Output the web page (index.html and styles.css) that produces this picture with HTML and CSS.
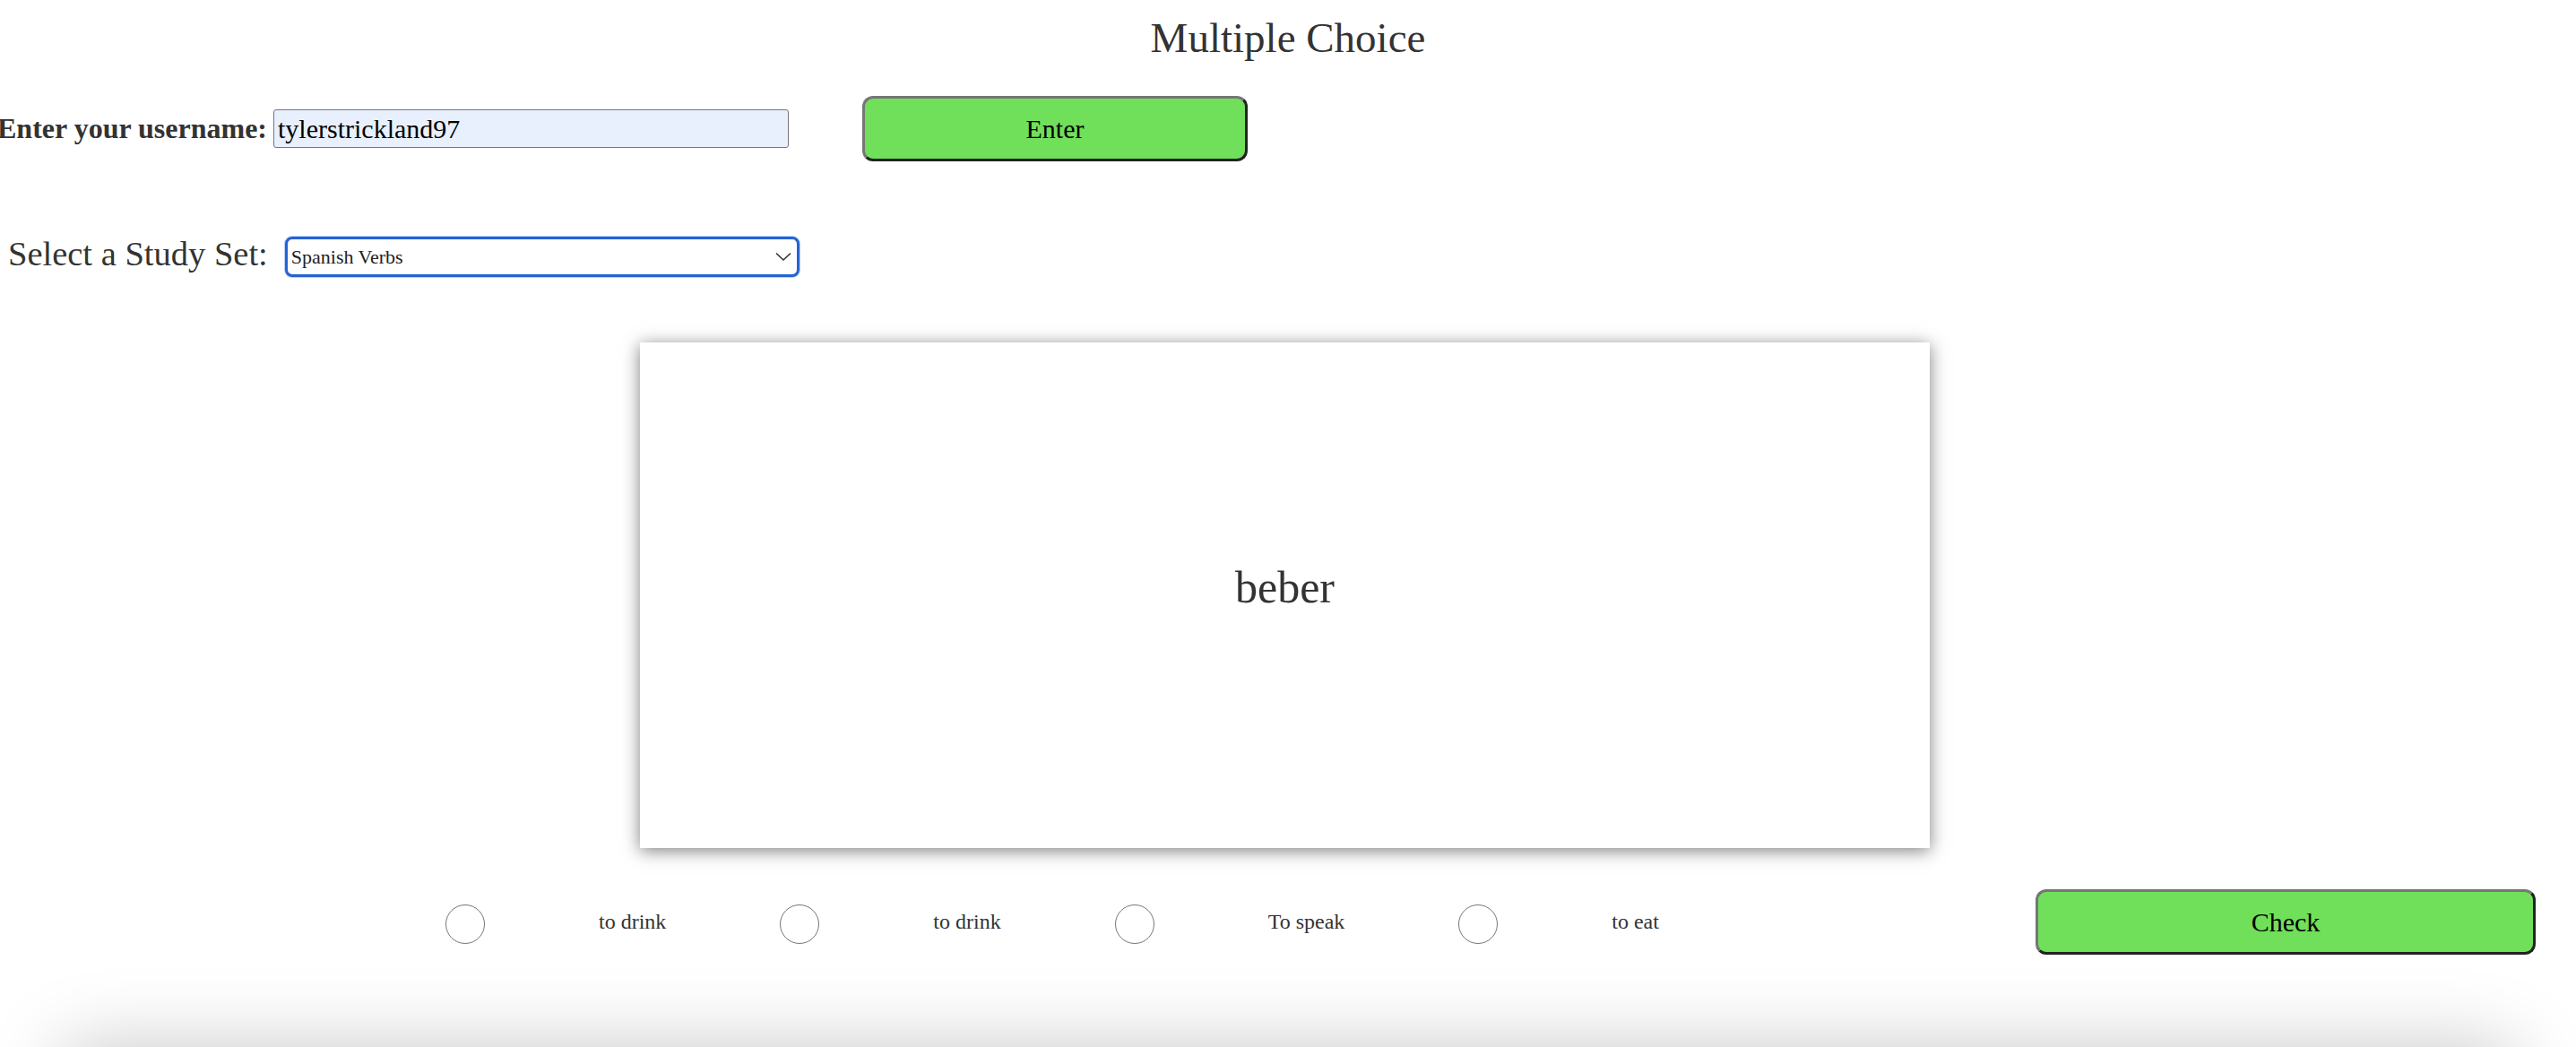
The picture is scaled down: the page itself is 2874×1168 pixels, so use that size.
FILE: index.html
```html
<!DOCTYPE html>
<html lang="en">
<head>
<meta charset="utf-8">
<title>Multiple Choice</title>
<link rel="stylesheet" href="styles.css">
</head>
<body>
<h1 class="title">Multiple Choice</h1>

<div class="user-row">
  <label class="user-label" for="username">Enter your username:</label>
  <input class="user-input" id="username" type="text" value="tylerstrickland97">
  <button class="btn btn-enter" type="button">Enter</button>
</div>

<div class="set-row">
  <label class="set-label" for="studyset">Select a Study Set:</label>
  <select class="set-select" id="studyset">
    <option>Spanish Verbs</option>
  </select>
</div>

<div class="card">
  <div class="card-word">beber</div>
</div>

<div class="answer-row">
  <input class="choice" type="radio" name="ans" id="a1"><label class="choice-label" for="a1">to drink</label>
  <input class="choice" type="radio" name="ans" id="a2"><label class="choice-label" for="a2">to drink</label>
  <input class="choice" type="radio" name="ans" id="a3"><label class="choice-label" for="a3">To speak</label>
  <input class="choice" type="radio" name="ans" id="a4"><label class="choice-label" for="a4">to eat</label>
  <button class="btn btn-check" type="button">Check</button>
</div>

<div class="next-card"></div>
</body>
</html>
```

FILE: styles.css
```css
html {
  overflow: hidden;
  background: #ffffff;
}

body {
  margin: 0;
  font-family: "Liberation Serif", "Times New Roman", serif;
  color: #333333;
  background: #ffffff;
}

.title {
  margin: 16px 0 0;
  font-size: 47px;
  line-height: 52px;
  font-weight: normal;
  text-align: center;
  color: #333333;
}

.user-row {
  display: flex;
  align-items: center;
  margin-top: 39px;
  margin-left: -3px;
  height: 73px;
}

.user-label {
  font-size: 32px;
  font-weight: bold;
  color: #333333;
  margin-right: 7px;
  white-space: nowrap;
}

.user-input {
  box-sizing: border-box;
  width: 575px;
  height: 43px;
  margin: 0;
  padding: 0 4px;
  border: 1px solid #767676;
  border-radius: 3px;
  background: #e8f0fe;
  font-family: "Liberation Serif", "Times New Roman", serif;
  font-size: 30px;
  color: #000000;
}

.btn {
  box-sizing: border-box;
  height: 73px;
  margin: 0;
  padding: 0;
  background: #70df5a;
  border-style: solid;
  border-width: 3px;
  border-color: #767676 #222222 #222222 #767676;
  border-radius: 12px;
  font-family: "Liberation Serif", "Times New Roman", serif;
  font-size: 30px;
  color: #000000;
}

.btn-enter {
  width: 430px;
  margin-left: 82px;
}

.set-row {
  display: flex;
  align-items: center;
  margin-top: 84px;
  padding-left: 9px;
  height: 45px;
}

.set-label {
  font-size: 38.5px;
  color: #333333;
  margin-right: 19px;
  white-space: nowrap;
  position: relative;
  top: -4px;
}

.set-select {
  box-sizing: border-box;
  width: 574px;
  height: 45px;
  margin: 0;
  padding: 0 30px 0 4px;
  -webkit-appearance: none;
  appearance: none;
  border: 3px solid #2563d4;
  border-radius: 8px;
  box-shadow: 0 0 0 1px #b9cff3;
  background-color: #ffffff;
  background-image: url("data:image/svg+xml;utf8,<svg xmlns='http://www.w3.org/2000/svg' width='18' height='11' viewBox='0 0 18 11'><path d='M1 1.5 L9 9 L17 1.5' fill='none' stroke='%23333' stroke-width='1.6'/></svg>");
  background-repeat: no-repeat;
  background-position: right 6px center;
  background-size: 18px 11px;
  font-family: "Liberation Serif", "Times New Roman", serif;
  font-size: 22px;
  color: #222222;
}

.card {
  box-sizing: border-box;
  width: 1439px;
  height: 564px;
  margin: 73px 0 0 calc(50% - 723px);
  background: #ffffff;
  box-shadow: 0 3px 18px rgba(0, 0, 0, 0.5);
  display: flex;
  align-items: center;
  justify-content: center;
  padding-bottom: 18px;
}

.card-word {
  font-size: 50px;
  color: #333333;
}

.answer-row {
  display: flex;
  align-items: center;
  gap: 127px;
  margin-top: 46px;
  padding-left: 497px;
  height: 73px;
}

.choice {
  -webkit-appearance: none;
  appearance: none;
  box-sizing: border-box;
  width: 44px;
  height: 44px;
  margin: 5px 0 0;
  border: 1px solid #767676;
  border-radius: 50%;
  background: #ffffff;
  flex: none;
}

.choice-label {
  font-size: 24px;
  color: #333333;
  white-space: nowrap;
}

.btn-check {
  width: 558px;
  margin-left: auto;
  margin-right: 45px;
}

.next-card {
  height: 400px;
  margin: 103px 70px 0;
  background: #ffffff;
  box-shadow: 0 0 80px rgba(0, 0, 0, 0.22);
}
```
